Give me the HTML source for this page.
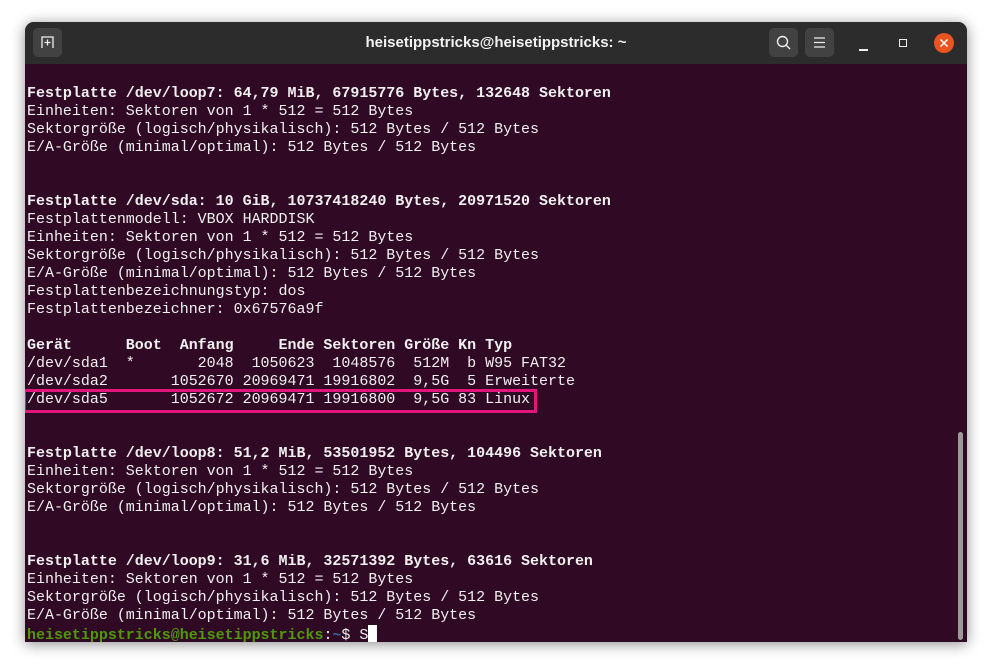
<!DOCTYPE html>
<html><head><meta charset="utf-8"><style>
html,body{margin:0;padding:0;background:#fff;width:993px;height:671px;overflow:hidden}
.win{position:absolute;left:25px;top:22px;width:942px;height:620px;background:#300a24;border-radius:9px 9px 0 0;box-shadow:0 2px 14px rgba(0,0,0,.45);overflow:hidden}
.tb{position:absolute;left:0;top:0;width:942px;height:42px;background:#2c2c2c}
.title{position:absolute;left:0;right:0;top:12px;text-align:center;color:#f2f2f2;font:bold 15px "Liberation Sans",sans-serif}
.btn{position:absolute;top:6px;width:29px;height:29px;background:#424242;border-radius:5px}
.term{position:absolute;left:2px;top:63px;font:14.98px/18px "Liberation Mono",monospace;color:#f0f0f0;white-space:pre;margin:0}
b{font-weight:bold}
.g{color:#4e9a06;font-weight:bold}.bl{color:#3465a4;font-weight:bold}
.cur{display:inline-block;width:9px;height:17px;background:#fff;vertical-align:-3px}
.box{position:absolute;left:-2px;top:367px;width:508px;height:18px;border:3px solid #e3157d}
.sb{position:absolute;left:933px;top:410px;width:5px;height:208px;background:#9a9a9a;border-radius:3px}
</style></head><body>
<div class="win">
<div class="tb">
<div class="btn" style="left:8px"><svg width="29" height="29"><path d="M9 20V9h11v11M14.5 11.5v6M11.5 14.5h6" stroke="#eee" stroke-width="1.3" fill="none"/></svg></div>
<div class="title">heisetippstricks@heisetippstricks: ~</div>
<div class="btn" style="left:744px"><svg width="29" height="29"><circle cx="13.5" cy="13.5" r="5" stroke="#eee" stroke-width="1.4" fill="none"/><path d="M17 17l4 4" stroke="#eee" stroke-width="1.4"/></svg></div>
<div class="btn" style="left:780px"><svg width="29" height="29"><path d="M9 10h11M9 14.5h11M9 19h11" stroke="#eee" stroke-width="1.3"/></svg></div>
<div style="position:absolute;left:834px;top:27px;width:9px;height:1.5px;background:#eee"></div>
<div style="position:absolute;left:874px;top:17px;width:6px;height:6px;border:1.4px solid #eee"></div>
<div style="position:absolute;left:909px;top:11px;width:20px;height:20px;border-radius:50%;background:#e95420"><svg width="20" height="20"><path d="M6.5 6.5l7 7M13.5 6.5l-7 7" stroke="#fff" stroke-width="1.5"/></svg></div>
</div>
<pre class="term">
<b>Festplatte /dev/loop7: 64,79 MiB, 67915776 Bytes, 132648 Sektoren</b>
Einheiten: Sektoren von 1 * 512 = 512 Bytes
Sektorgröße (logisch/physikalisch): 512 Bytes / 512 Bytes
E/A-Größe (minimal/optimal): 512 Bytes / 512 Bytes


<b>Festplatte /dev/sda: 10 GiB, 10737418240 Bytes, 20971520 Sektoren</b>
Festplattenmodell: VBOX HARDDISK
Einheiten: Sektoren von 1 * 512 = 512 Bytes
Sektorgröße (logisch/physikalisch): 512 Bytes / 512 Bytes
E/A-Größe (minimal/optimal): 512 Bytes / 512 Bytes
Festplattenbezeichnungstyp: dos
Festplattenbezeichner: 0x67576a9f

<b>Gerät      Boot  Anfang     Ende Sektoren Größe Kn Typ</b>
/dev/sda1  *       2048  1050623  1048576  512M  b W95 FAT32
/dev/sda2       1052670 20969471 19916802  9,5G  5 Erweiterte
/dev/sda5       1052672 20969471 19916800  9,5G 83 Linux


<b>Festplatte /dev/loop8: 51,2 MiB, 53501952 Bytes, 104496 Sektoren</b>
Einheiten: Sektoren von 1 * 512 = 512 Bytes
Sektorgröße (logisch/physikalisch): 512 Bytes / 512 Bytes
E/A-Größe (minimal/optimal): 512 Bytes / 512 Bytes


<b>Festplatte /dev/loop9: 31,6 MiB, 32571392 Bytes, 63616 Sektoren</b>
Einheiten: Sektoren von 1 * 512 = 512 Bytes
Sektorgröße (logisch/physikalisch): 512 Bytes / 512 Bytes
E/A-Größe (minimal/optimal): 512 Bytes / 512 Bytes
<span class="g">heisetippstricks@heisetippstricks</span>:<span class="bl">~</span>$ S<span class="cur"></span></pre>
<div class="box"></div>
<div class="sb"></div>
</div>
</body></html>
